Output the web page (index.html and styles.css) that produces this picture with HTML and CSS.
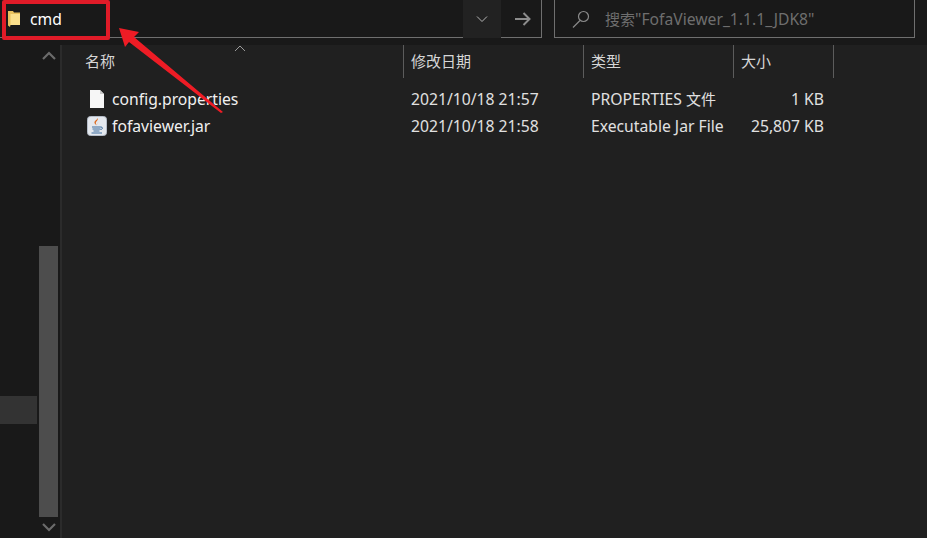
FILE: index.html
```html
<!DOCTYPE html>
<html lang="en">
<head>
  <meta charset="UTF-8">
  <title>cmd</title>
  <link rel="stylesheet" href="styles.css">
</head>
<body>
  <header class="toolbar">
    <div class="address">
      <svg class="folder" width="12" height="16" viewBox="0 0 12 16">
        <path d="M0 0h5l1 1.500h6V14H2.500L2 16 0 14.500z" fill="#e9c25e"/>
        <path d="M2.500 3H12v11H2.500z" fill="#fbe08c"/>
      </svg>
      <span class="address-text">cmd</span>
      <div class="dropdown">
        <svg width="12" height="8" viewBox="0 0 12 8"><path d="M1 1.500l5 5 5-5" fill="none" stroke="#b5b5b5" stroke-width="1"/></svg>
      </div>
      <div class="go">
        <svg width="16" height="14" viewBox="0 0 16 14"><path d="M0 7h14M8.500 1l6 6-6 6" fill="none" stroke="#8c8c8c" stroke-width="2"/></svg>
      </div>
    </div>
    <div class="search">
      <svg class="search-icon" width="18" height="18" viewBox="0 0 18 18"><circle cx="11.500" cy="6.500" r="5" fill="none" stroke="#8a8a8a" stroke-width="1.200"/><path d="M8 10.500L1 17.500" stroke="#8a8a8a" stroke-width="1.200"/></svg>
      <span class="search-text"><span class="cjk">搜索</span>"FofaViewer_1.1.1_JDK8"</span>
    </div>
  </header>

  <div class="main">
    <aside class="sidebar">
      <nav class="nav">
        <div class="nav-selected"></div>
      </nav>
      <div class="scrollbar">
        <div class="scroll-btn">
          <svg width="14" height="9" viewBox="0 0 14 9"><path d="M1 8l6-6 6 6" fill="none" stroke="#6b6b6b" stroke-width="2.200"/></svg>
        </div>
        <div class="scroll-track"><div class="scroll-thumb"></div></div>
        <div class="scroll-btn">
          <svg width="14" height="9" viewBox="0 0 14 9"><path d="M1 1l6 6 6-6" fill="none" stroke="#6b6b6b" stroke-width="2.200"/></svg>
        </div>
      </div>
    </aside>

    <section class="files">
      <div class="columns">
        <div class="col">名称
          <svg class="sort" width="12" height="7" viewBox="0 0 12 7"><path d="M1 6l5-5 5 5" fill="none" stroke="#9a9a9a" stroke-width="1"/></svg>
        </div>
        <div class="col">修改日期</div>
        <div class="col">类型</div>
        <div class="col">大小</div>
      </div>

      <div class="row">
        <div class="name">
          <svg class="file-icon" width="20" height="20" viewBox="0 0 20 20">
            <path d="M3 1h10l4 4v14H3z" fill="#f6f6f6"/>
            <path d="M13 1v4h4z" fill="#c9c9c9"/>
          </svg>
          config.properties
        </div>
        <div>2021/10/18 21:57</div>
        <div>PROPERTIES <span class="cjk">文件</span></div>
        <div class="size">1 KB</div>
      </div>
      <div class="row">
        <div class="name">
          <svg class="file-icon" width="20" height="20" viewBox="0 0 20 20">
            <rect x="0.500" y="0.500" width="19" height="19" rx="3" fill="#e4e8ee" stroke="#b4bcc8"/>
            <path d="M10.500 2c1.500 2.200-2.500 3.500-1.500 6 .3.800 1 1.500 1 1.500-2.200-1-3.200-2.600-2.200-4.200C8.600 4 10.500 3.500 10.500 2zM12.500 5.500c-1.800 1-2.300 2-1.700 3.800-.8-1.800-.2-3 1.700-3.800z" fill="#dd6a1f"/>
            <path d="M5 11h9M5.500 13h8M6.500 15h6" stroke="#3d6d9e" stroke-width="1.200" fill="none"/>
            <path d="M14 11c2 0 2 2.500-.5 2.500" stroke="#3d6d9e" fill="none"/>
            <path d="M4.500 17h10.500" stroke="#3d6d9e" stroke-width="1"/>
          </svg>
          fofaviewer.jar
        </div>
        <div>2021/10/18 21:58</div>
        <div>Executable Jar File</div>
        <div class="size">25,807 KB</div>
      </div>
    </section>
  </div>

  <!-- red annotation drawn over the screenshot -->
  <div class="mark-box"></div>
  <svg class="mark-arrow" width="927" height="538" viewBox="0 0 927 538">
    <path d="M119 28L139 32 134 37 223 112 221 113 129 42 125 47z" fill="#ee1c25"/>
  </svg>
</body>
</html>
```

FILE: styles.css
```css
html, body {
  height: 100%;
}
body {
  margin: 0;
  display: flex;
  flex-direction: column;
  overflow: hidden;
  background-color: #191919;
  color: #e6e6e6;
  font-family: "Noto Sans", "Noto Sans CJK SC", sans-serif;
  font-size: 15px;
}
svg {
  display: block;
}
.cjk {
  font-size: 15px;
}

/* top bar */
.toolbar {
  display: flex;
  height: 45px;
  flex: none;
  background-color: #191919;
}
.address {
  display: flex;
  align-items: center;
  width: 541px;
  height: 37px;
  border-top: 1px solid #3c3c3c;
  border-right: 1px solid #6f6f6f;
  border-bottom: 1px solid #6f6f6f;
  margin-top: -1px;
  background-color: #191919;
}
.folder {
  margin-left: 8px;
}
.address-text {
  margin-left: 10px;
  flex: 1;
  color: #fff;
  font-size: 15.700px;
}
.dropdown {
  display: flex;
  align-items: center;
  justify-content: center;
  width: 38px;
  height: 38px;
  margin-bottom: -1px;
  background-color: #222;
}
.go {
  display: flex;
  align-items: center;
  justify-content: center;
  width: 40px;
  padding-left: 4px;
  box-sizing: border-box;
}
.search {
  display: flex;
  align-items: center;
  width: 359px;
  height: 37px;
  margin-left: 12px;
  border-right: 1px solid #6f6f6f;
  border-bottom: 1px solid #6f6f6f;
  border-left: 1px solid #6f6f6f;
  color: #6e6e6e;
}
.search-icon {
  margin-left: 17px;
}
.search-text {
  margin-left: 15px;
  font-size: 15.700px;
}

/* left pane */
.main {
  display: flex;
  flex: 1;
  min-height: 0;
}
.sidebar {
  display: flex;
  width: 60px;
  flex: none;
  border-right: 2px solid #2b2b2b;
}
.nav {
  width: 39px;
  padding-top: 351px;
  box-sizing: border-box;
}
.nav-selected {
  width: 37px;
  height: 28px;
  background-color: #333;
}
.scrollbar {
  display: flex;
  flex-direction: column;
  width: 19px;
}
.scroll-btn {
  display: flex;
  align-items: center;
  justify-content: center;
  height: 21px;
  flex: none;
}
.scroll-track {
  display: flex;
  flex-direction: column;
  flex: 1;
  justify-content: flex-end;
}
.scroll-thumb {
  height: 271px;
  background-color: #4d4d4d;
}

/* file list */
.files {
  flex: 1;
  padding-left: 15px;
  background-color: #202020;
}
.columns {
  display: grid;
  grid-template-columns: 327px 180px 150px 100px;
  height: 31px;
}
.col {
  position: relative;
  padding-left: 7px;
  border-right: 1px solid #5c5c5c;
  line-height: 33px;
  color: #d6d6d6;
}
.col:first-child {
  padding-left: 8px;
}
.sort {
  position: absolute;
  top: 0;
  left: 157px;
}
.row {
  display: grid;
  grid-template-columns: 327px 180px 150px 100px;
  height: 27px;
  align-items: center;
  color: #e0e0e0;
  font-size: 15.700px;
}
.columns + .row {
  margin-top: 9px;
}
.row > div {
  padding-left: 7px;
}
.row > .name {
  display: flex;
  align-items: center;
  gap: 5px;
  padding-left: 10px;
  color: #f0f0f0;
}
.row > .size {
  padding-right: 10px;
  text-align: right;
}

/* annotation */
.mark-box {
  position: absolute;
  top: 0;
  left: 2px;
  width: 100px;
  height: 32px;
  border: 4px solid #e01b28;
  border-radius: 2px;
}
.mark-arrow {
  position: absolute;
  top: 0;
  left: 0;
}
```
